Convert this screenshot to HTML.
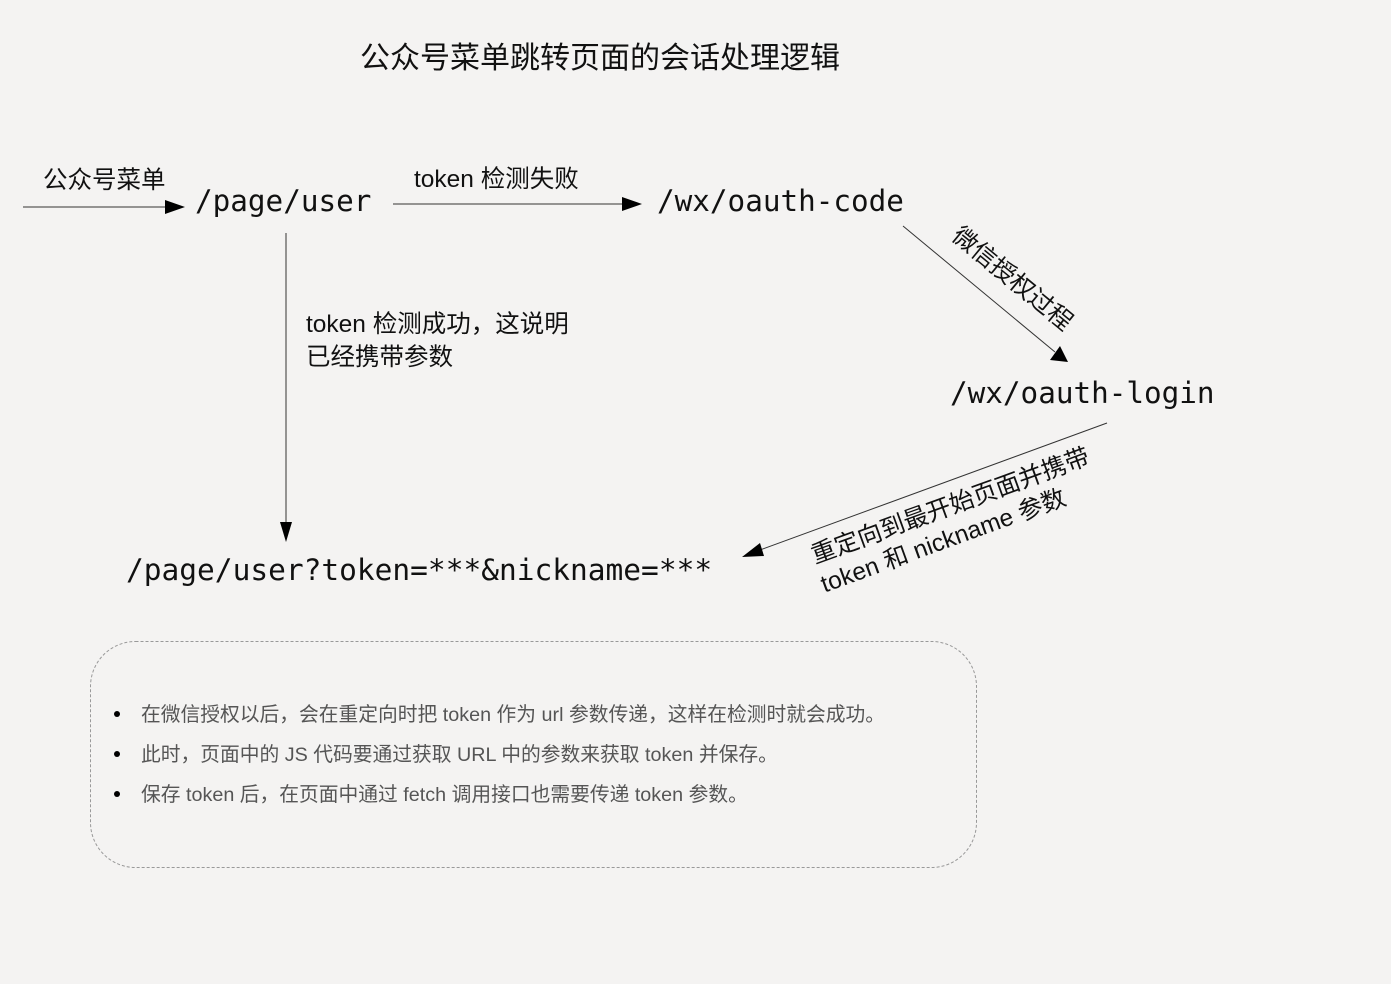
<!DOCTYPE html>
<html><head><meta charset="utf-8"><style>
html,body{margin:0;padding:0;background:#f4f3f2;}
svg{display:block}
.cn{font-family:"Liberation Sans","Noto Sans CJK SC",sans-serif;fill:#111}
.mono{font-family:"DejaVu Sans Mono","Liberation Mono",monospace;fill:#111}
.li{font-family:"Liberation Sans","Noto Sans CJK SC",sans-serif;fill:#555;font-size:19.75px}
</style></head><body>
<svg width="1391" height="984" viewBox="0 0 1391 984" xmlns="http://www.w3.org/2000/svg">
<rect width="1391" height="984" fill="#f4f3f2"/>
<text class="cn" x="600" y="68" font-size="30" text-anchor="middle">公众号菜单跳转页面的会话处理逻辑</text>

<text class="cn" x="43" y="188" font-size="24.5">公众号菜单</text>
<line x1="23" y1="207" x2="168" y2="207" stroke="#333" stroke-width="1"/>
<polygon points="165,200 185,207 165,214" fill="#000"/>
<text class="mono" x="195" y="211" font-size="29.3">/page/user</text>

<text class="cn" x="414" y="187" font-size="24.5">token 检测失败</text>
<line x1="393" y1="204" x2="625" y2="204" stroke="#333" stroke-width="1"/>
<polygon points="622,197 642,204 622,211" fill="#000"/>
<text class="mono" x="657" y="211" font-size="29.3">/wx/oauth-code</text>

<line x1="903" y1="226" x2="1055" y2="352" stroke="#333" stroke-width="1"/>
<polygon points="1050,360 1068,362 1060,346" fill="#000"/>
<text class="cn" font-size="24.5" transform="translate(1013,278) rotate(39.5)" text-anchor="middle" dy="9">微信授权过程</text>

<text class="mono" x="950" y="403" font-size="29.3">/wx/oauth-login</text>

<line x1="1107" y1="423" x2="760" y2="550" stroke="#333" stroke-width="1"/>
<polygon points="742,557 760,543 764,556" fill="#000"/>
<text class="cn" font-size="24.5" transform="translate(950,505) rotate(-20)" text-anchor="middle" dy="9">重定向到最开始页面并携带</text>
<text class="cn" font-size="24.5" transform="translate(943,540) rotate(-20)" text-anchor="middle" dy="9">token 和 nickname 参数</text>

<line x1="286" y1="233" x2="286" y2="525" stroke="#333" stroke-width="1"/>
<polygon points="280,522 286,542 292,522" fill="#000"/>
<text class="cn" x="306" y="332" font-size="24.5">token 检测成功，这说明</text>
<text class="cn" x="306" y="365" font-size="24.5">已经携带参数</text>

<text class="mono" x="126" y="580" font-size="29.5">/page/user?token=***&amp;nickname=***</text>

<rect x="90.5" y="641.5" width="886" height="226" rx="45" ry="45" fill="none" stroke="#999" stroke-width="1" stroke-dasharray="3,2"/>
<circle cx="117" cy="714" r="3" fill="#000"/>
<circle cx="117" cy="754" r="3" fill="#000"/>
<circle cx="117" cy="794" r="3" fill="#000"/>
<text class="li" x="141" y="721">在微信授权以后，会在重定向时把 token 作为 url 参数传递，这样在检测时就会成功。</text>
<text class="li" x="141" y="761">此时，页面中的 JS 代码要通过获取 URL 中的参数来获取 token 并保存。</text>
<text class="li" x="141" y="801">保存 token 后，在页面中通过 fetch 调用接口也需要传递 token 参数。</text>
</svg>
</body></html>
